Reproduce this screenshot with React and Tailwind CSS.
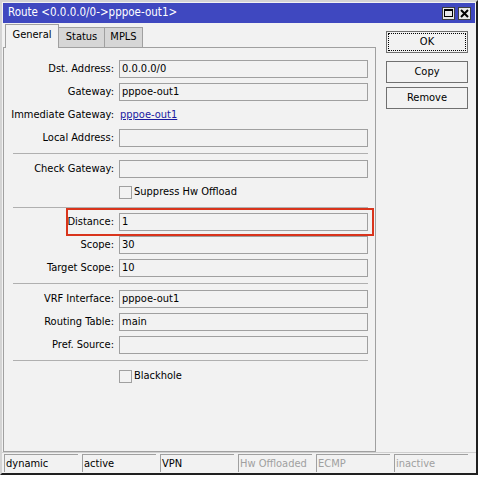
import React from "react";

const F = { fontFamily: '"DejaVu Sans Condensed", "Liberation Sans", sans-serif' };

function Row({ label, value, className = "" }) {
  return (
    <div className={"flex items-center h-[18px] " + className}>
      <div className="w-[111px] text-right pr-[1px] whitespace-nowrap">{label}</div>
      <div className="ml-[4px] w-[249px] h-[18px] border border-[#a0a0a0] bg-[#f2f2f2] pl-[2px] leading-[16px]">
        {value}
      </div>
    </div>
  );
}

function Sep({ className = "" }) {
  return <div className={"ml-[9px] mr-[7px] h-[1px] bg-[#b0b0b0] " + className} />;
}

function Check({ label, className = "" }) {
  return (
    <div className={"flex items-center h-[18px] " + className}>
      <div className="w-[115px]" />
      <div className="w-[13px] h-[13px] border border-[#a0a0a0] bg-[#f2f2f2]" />
      <div className="ml-[2px]">{label}</div>
    </div>
  );
}

function Btn({ children, focus }) {
  return (
    <div className="w-[82px] h-[22px] border border-[#707070] bg-[#f2f2f2] p-[1px]">
      <div
        className={
          "w-full h-full flex items-center justify-center " +
          (focus ? "border border-dotted border-black" : "")
        }
      >
        {children}
      </div>
    </div>
  );
}

function Cell({ children, gray }) {
  return (
    <div
      className={
        "w-[74px] h-[18px] border-t border-l border-[#a0a0a0] pl-[1px] leading-[17px] " +
        (gray ? "text-[#a0a0a0]" : "text-black")
      }
    >
      {children}
    </div>
  );
}

export default function App() {
  return (
    <div className="w-[479px] h-[479px] bg-white overflow-hidden text-[11px] text-black" style={F}>
      <div className="w-[478px] h-[475px] border-l-[2px] border-t-[2px] border-[#d4d4d4] border-r-[2px] border-r-[#202020] border-b-[2px] border-b-[#202020] flex flex-col bg-[#f2f2f2] relative">
        {/* title bar */}
        <div className="h-[21px] mx-[1px] mt-[1px] bg-[#3f48c0] flex items-center pl-[5px] pr-[4px] text-white text-[11.5px]">
          <div className="flex-1 whitespace-nowrap">Route &lt;0.0.0.0/0-&gt;pppoe-out1&gt;</div>
          <div className="flex gap-[3px]">
            <div className="w-[13px] h-[13px] bg-[#e8e8e8] border border-[#404040] flex items-center justify-center">
              <div className="w-[9px] h-[8px] border border-black border-t-[2px]" />
            </div>
            <div className="w-[13px] h-[13px] bg-[#e8e8e8] border border-[#404040] flex items-center justify-center">
              <svg width="9" height="9" viewBox="0 0 9 9">
                <path d="M1 1 L8 8 M8 1 L1 8" stroke="black" strokeWidth="2" />
              </svg>
            </div>
          </div>
        </div>

        <div className="flex flex-1">
          {/* left */}
          <div className="w-[374px] flex flex-col pl-[1px]">
            <div className="flex items-end h-[24px] pl-[2px]">
              <div className="h-[24px] w-[54px] border-t border-l border-r border-[#a0a0a0] bg-[#f2f2f2] flex items-center justify-center relative z-10 -mb-[1px] pb-[2px]">
                General
              </div>
              <div className="h-[20px] w-[46px] border-t border-r border-[#a0a0a0] bg-[#d6d6d6] flex items-center justify-center">
                Status
              </div>
              <div className="h-[20px] w-[38px] border-t border-r border-[#a0a0a0] bg-[#d6d6d6] flex items-center justify-center">
                MPLS
              </div>
            </div>
            <div className="h-[405px] border border-[#a0a0a0] pt-[12px] flex flex-col">
              <Row label="Dst. Address:" value="0.0.0.0/0" />
              <Row label="Gateway:" value="pppoe-out1" className="mt-[5px]" />
              <div className="flex items-center h-[18px] mt-[5px]">
                <div className="w-[111px] text-right pr-[1px] whitespace-nowrap">Immediate Gateway:</div>
                <div className="ml-[5px] text-[#1a1aa0] underline">pppoe-out1</div>
              </div>
              <Row label="Local Address:" value="" className="mt-[5px]" />
              <Sep className="mt-[6px]" />
              <Row label="Check Gateway:" value="" className="mt-[6px]" />
              <Check label="Suppress Hw Offload" className="mt-[5px]" />
              <Sep className="mt-[6px]" />
              <Row label="Distance:" value="1" className="mt-[5px]" />
              <Row label="Scope:" value="30" className="mt-[5px]" />
              <Row label="Target Scope:" value="10" className="mt-[5px]" />
              <Sep className="mt-[6px]" />
              <Row label="VRF Interface:" value="pppoe-out1" className="mt-[6px]" />
              <Row label="Routing Table:" value="main" className="mt-[5px]" />
              <Row label="Pref. Source:" value="" className="mt-[5px]" />
              <Sep className="mt-[6px]" />
              <Check label="Blackhole" className="mt-[6px]" />
            </div>
          </div>
          {/* right buttons */}
          <div className="flex-1 flex flex-col items-start pl-[10px] pt-[8px] gap-[6px]">
            <Btn focus>OK</Btn>
            <div className="flex flex-col gap-[4px] mt-[2px]">
              <Btn>Copy</Btn>
              <Btn>Remove</Btn>
            </div>
          </div>
        </div>

        {/* status bar */}
        <div className="h-[20px] flex gap-[4px] pl-[2px] mb-[1px] border-t border-[#d0d0d0] pt-[1px]">
          <Cell>dynamic</Cell>
          <Cell>active</Cell>
          <Cell>VPN</Cell>
          <Cell gray>Hw Offloaded</Cell>
          <Cell gray>ECMP</Cell>
          <Cell gray>inactive</Cell>
        </div>

        {/* red highlight annotation */}
        <div className="absolute left-[64px] top-[206px] w-[308px] h-[28px] border-[2px] border-[#d9341c]" />
      </div>
    </div>
  );
}
